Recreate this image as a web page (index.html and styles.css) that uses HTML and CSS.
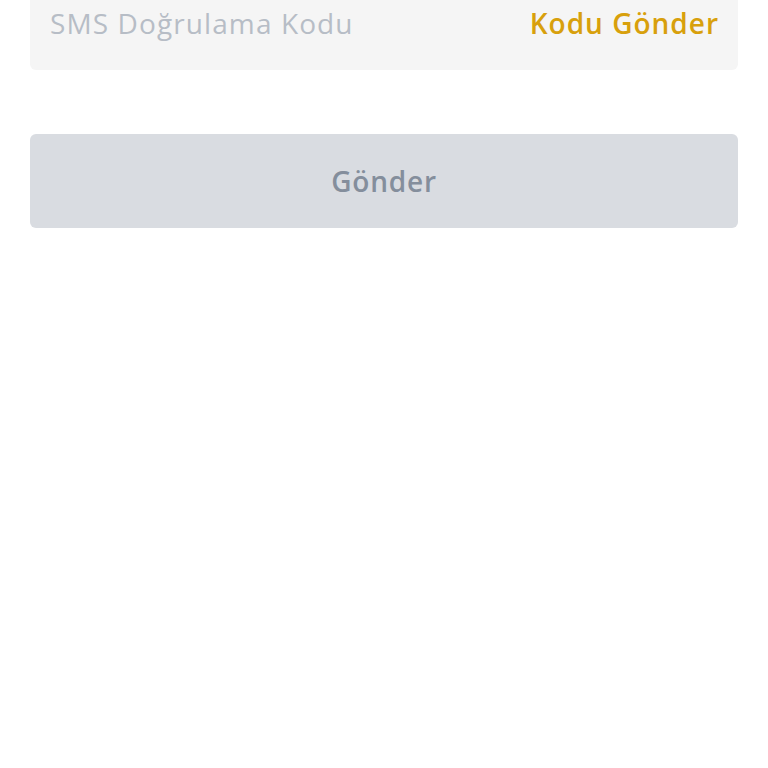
FILE: index.html
```html
<!DOCTYPE html>
<html lang="tr">
<head>
<meta charset="utf-8">
<link rel="stylesheet" href="styles.css">
</head>
<body>
<main class="form">
  <div class="field">
    <input class="field-input" type="text" placeholder="SMS Doğrulama Kodu">
    <button class="send-code" type="button">Kodu Gönder</button>
  </div>
  <button class="submit" type="button" disabled>Gönder</button>
</main>
</body>
</html>
```
FILE: styles.css
```css
html, body {
  margin: 0;
  padding: 0;
  background: #ffffff;
}
body {
  font-family: "Open Sans", "Liberation Sans", sans-serif;
}
.form {
  margin-top: -25px;
  padding: 0 30px;
  display: flex;
  flex-direction: column;
  gap: 64px;
}
.field {
  height: 95px;
  background: #f5f5f5;
  border-radius: 6px;
  display: flex;
  align-items: center;
  padding: 0 20px;
  box-sizing: border-box;
}
.field-input {
  flex: 1;
  min-width: 0;
  border: none;
  outline: none;
  background: transparent;
  font-family: inherit;
  font-size: 28px;
  letter-spacing: 1.1px;
  color: #1e2329;
  padding: 0;
}
.field-input::placeholder {
  color: #b7bdc6;
}
.send-code {
  border: none;
  background: transparent;
  padding: 0;
  font-family: inherit;
  font-size: 28px;
  font-weight: 600;
  letter-spacing: 1px;
  color: #d8a00c;
  margin-right: -1px;
}
.submit {
  height: 94px;
  border: none;
  border-radius: 6px;
  background: #d9dce1;
  color: #848e9c;
  font-family: inherit;
  font-size: 28px;
  font-weight: 600;
  letter-spacing: 0.8px;
}
```
